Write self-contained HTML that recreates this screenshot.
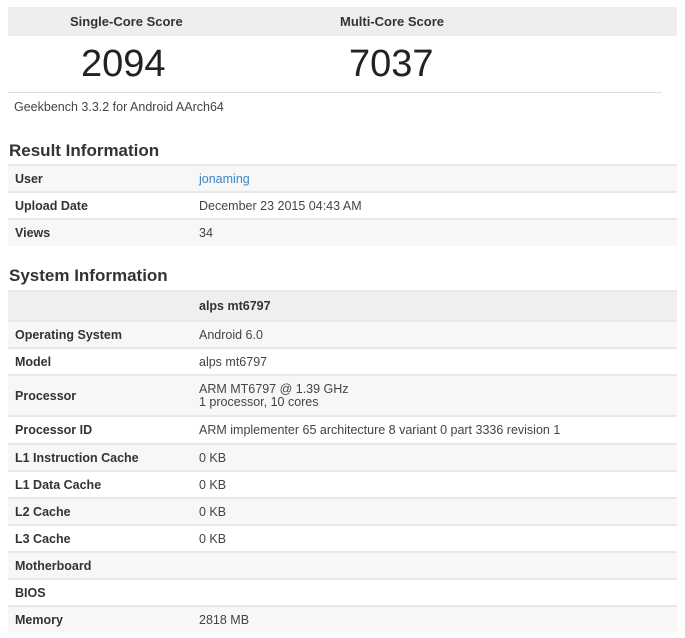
<!DOCTYPE html>
<html><head><style>
*{margin:0;padding:0;box-sizing:border-box}
body{width:685px;height:638px;background:#fff;font-family:"Liberation Sans",Arial,sans-serif;color:#333;position:relative;overflow:hidden}
.abs{position:absolute}
.sh{left:8px;top:7px;width:669px;height:29px;background:#eee}
.sh div{position:absolute;top:7px;font-size:13px;font-weight:bold;color:#333}
.num{position:absolute;top:43px;font-size:38px;color:#222}
h2{position:absolute;left:9px;font-size:17px;font-weight:bold;color:#333}
table{position:absolute;left:8px;width:669px;border-collapse:collapse;font-size:12.5px}
td{border-top:2px solid #e8e8e8;padding:0 0 0 7px;vertical-align:middle}
td.k{width:184px;font-weight:bold;color:#333}
td.v{color:#444}
tr.g td{background:#f7f7f7}
tr.h td{background:#efefef;font-weight:bold}
a{color:#3a87c8;text-decoration:none}
</style></head><body>
<div class="abs sh"><div style="left:62px">Single-Core Score</div><div style="left:332px">Multi-Core Score</div></div>
<div class="num" style="left:81px">2094</div>
<div class="num" style="left:349px">7037</div>
<div class="abs" style="left:8px;top:92px;width:654px;height:1px;background:#ddd"></div>
<div class="abs" style="left:14px;top:100px;font-size:12.5px;color:#444">Geekbench 3.3.2 for Android AArch64</div>
<h2 style="top:141px">Result Information</h2>
<table style="top:164px">
<tr class="g" style="height:27px"><td class="k">User</td><td class="v"><a>jonaming</a></td></tr>
<tr style="height:27px"><td class="k">Upload Date</td><td class="v">December 23 2015 04:43 AM</td></tr>
<tr class="g" style="height:27px"><td class="k">Views</td><td class="v">34</td></tr>
</table>
<h2 style="top:266px">System Information</h2>
<table style="top:290px">
<tr class="h" style="height:30px"><td class="k"></td><td class="v" style="color:#333">alps mt6797</td></tr>
<tr class="g" style="height:27px"><td class="k">Operating System</td><td class="v">Android 6.0</td></tr>
<tr style="height:27px"><td class="k">Model</td><td class="v">alps mt6797</td></tr>
<tr class="g" style="height:41px"><td class="k">Processor</td><td class="v" style="line-height:13px">ARM MT6797 @ 1.39 GHz<br>1 processor, 10 cores</td></tr>
<tr style="height:28px"><td class="k">Processor ID</td><td class="v">ARM implementer 65 architecture 8 variant 0 part 3336 revision 1</td></tr>
<tr class="g" style="height:27px"><td class="k">L1 Instruction Cache</td><td class="v">0 KB</td></tr>
<tr style="height:27px"><td class="k">L1 Data Cache</td><td class="v">0 KB</td></tr>
<tr class="g" style="height:27px"><td class="k">L2 Cache</td><td class="v">0 KB</td></tr>
<tr style="height:27px"><td class="k">L3 Cache</td><td class="v">0 KB</td></tr>
<tr class="g" style="height:27px"><td class="k">Motherboard</td><td class="v"></td></tr>
<tr style="height:27px"><td class="k">BIOS</td><td class="v"></td></tr>
<tr class="g" style="height:27px"><td class="k">Memory</td><td class="v">2818 MB</td></tr>
</table>
</body></html>
